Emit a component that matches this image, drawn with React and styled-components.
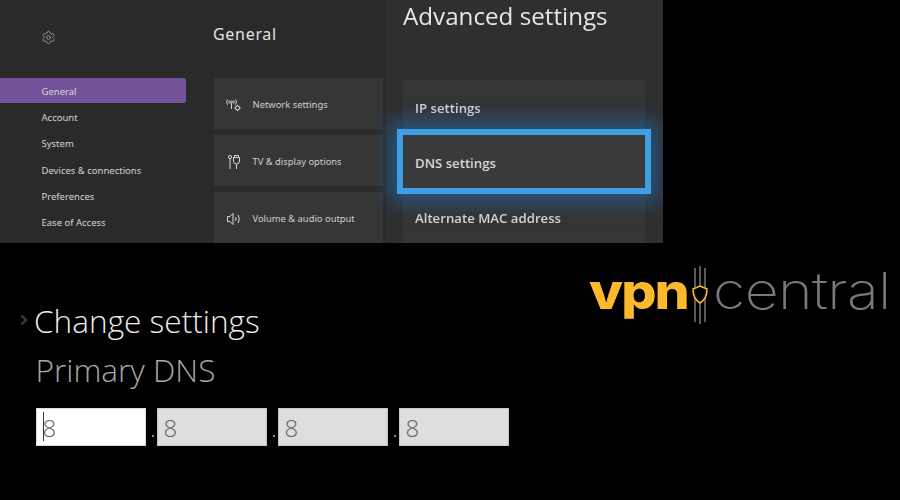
import React from 'react';
import styled, { createGlobalStyle } from 'styled-components';
import { Settings } from 'lucide-react';

const GlobalStyle = createGlobalStyle`
    html, body {
        margin: 0;
        padding: 0;
        background: #000;
    }
    body {
        width: 900px;
        height: 500px;
        overflow: hidden;
        font-family: "Noto Sans", sans-serif;
    }
`;

const Page = styled.div`
    width: 900px;
    height: 500px;
    background: #000;
    display: flex;
    flex-direction: column;
`;

const Console = styled.section`
    width: 663px;
    height: 243px;
    flex: none;
    display: flex;
    overflow: hidden;
    background: #2a2a2b;
`;

const Sidebar = styled.nav`
    width: 186px;
    flex: none;
    display: flex;
    flex-direction: column;
`;

const GearSlot = styled.div`
    height: 78px;
    padding: 30px 0 0 41px;
    box-sizing: border-box;
    color: #c4c4c4;
    display: flex;
    align-items: flex-start;
`;

const NavItem = styled.div`
    height: ${({$active}) => $active ? '25px' : '26.3px'};
    margin-bottom: ${({$active}) => $active ? '1px' : '0'};
    box-sizing: border-box;
    display: flex;
    align-items: center;
    padding: 1px 0 0 41.5px;
    font-size: 9.5px;
    color: #d4d4d4;
    background: ${({$active}) => $active ? '#74539b' : 'transparent'};
    border-radius: ${({$active}) => $active ? '0 3px 3px 0' : '0'};
`;

const GeneralColumn = styled.div`
    width: 200px;
    flex: none;
    box-sizing: border-box;
    padding-left: 28px;
    display: flex;
    flex-direction: column;
`;

const GeneralTitle = styled.h2`
    height: 78px;
    margin: 0 0 0 -1px;
    padding-top: 21px;
    box-sizing: border-box;
    font-size: 16px;
    line-height: 26px;
    font-weight: 400;
    letter-spacing: 0.7px;
    color: #e2e2e2;
    font-family: "Noto Sans", sans-serif;
`;

const MenuList = styled.div`
    display: flex;
    flex-direction: column;
    gap: 6px;
`;

const MenuCard = styled.div`
    width: 169px;
    height: 51px;
    flex: none;
    box-sizing: border-box;
    padding: 2px 0 0 12px;
    display: flex;
    align-items: center;
    gap: 10.5px;
    background: #363636;
    color: #cfcfcf;
    font-size: 9.4px;
`;

const MenuIcon = styled.svg`
    width: 16px;
    height: 16px;
    flex: none;
    fill: none;
    stroke: #d8d8d8;
    stroke-width: 1;
`;

const AdvancedColumn = styled.div`
    flex: 1;
    box-sizing: border-box;
    padding-left: 17px;
    padding-right: 18px;
    background: #2f2f2f;
    display: flex;
    flex-direction: column;
`;

const AdvancedTitle = styled.h1`
    height: 80px;
    margin: 0;
    font-family: "Open Sans", sans-serif;
    font-size: 24.2px;
    line-height: 32px;
    font-weight: 400;
    color: #e6e6e6;
    filter: blur(0.4px);
`;

const AdvancedRow = styled.div`
    height: ${({$focused}) => $focused ? '53px' : '55px'};
    flex: none;
    box-sizing: border-box;
    padding: ${({$drop = 1}) => $drop}px 0 0 12px;
    display: flex;
    align-items: center;
    background: ${({$focused}) => $focused ? '#3a3a3a' : '#353535'};
    color: #d6d6d6;
    font-family: "Open Sans", sans-serif;
    font-size: 13.2px;
    font-weight: 600;
    filter: ${({$focused}) => $focused ? 'none' : 'blur(0.4px)'};
    ${({$focused}) => $focused && `
        position: relative;
        z-index: 1;
        outline: 6px solid #3f9fe6;
        box-shadow: 0 0 18px 14px rgba(30, 120, 200, 0.5);
    `}
`;

const Lower = styled.section`
    flex: 1;
    display: flex;
    justify-content: space-between;
    padding: 17px 12px 0 20px;
`;

const DnsForm = styled.div`
    display: flex;
    flex-direction: column;
    padding-top: 39px;
`;

const Heading = styled.div`
    display: flex;
    align-items: center;
    height: 42px;
    color: #ececec;
    font-family: "Open Sans", sans-serif;
    font-weight: 300;
    font-size: 31.6px;
    gap: 6px;
    white-space: nowrap;
`;

const Chevron = styled.svg`
    width: 8px;
    height: 12px;
    flex: none;
    fill: none;
    stroke: #3a3a3a;
    stroke-width: 2.4;
`;

const SubHeading = styled.div`
    margin: 8px 0 0 15.5px;
    height: 42px;
    line-height: 42px;
    color: #a6a6a6;
    font-family: "Open Sans", sans-serif;
    font-weight: 300;
    font-size: 31.6px;
    white-space: nowrap;
`;

const IpRow = styled.div`
    margin: 17px 0 0 15.5px;
    display: flex;
    align-items: stretch;
`;

const Octet = styled.div`
    position: relative;
    width: 110px;
    height: 38px;
    box-sizing: border-box;
    padding-left: 6px;
    display: flex;
    align-items: center;
    background: ${({$active}) => $active ? '#ffffff' : '#dedede'};
    border: 1px solid ${({$active}) => $active ? '#dcdcdc' : '#c4c4c4'};
    color: #666;
    font-family: "Open Sans", sans-serif;
    font-weight: 300;
    font-size: 24px;
`;

const Caret = styled.span`
    position: absolute;
    left: 6px;
    top: 3px;
    width: 1px;
    height: 29px;
    background: #333;
`;

const Dot = styled.span`
    width: 11px;
    display: flex;
    justify-content: center;
    align-items: flex-end;
    padding: 0 0 9px 3px;
    box-sizing: border-box;
    &::before {
        content: "";
        width: 2px;
        height: 2px;
        background: #8a8a8a;
    }
`;

const Logo = styled.div`
    display: flex;
    align-items: center;
    height: 64px;
    line-height: 1;
    margin-top: 3px;
`;

const LogoWord = styled.span`
    display: block;
    flex: none;
    width: ${({$width}) => $width}px;
    font-family: "Inter", sans-serif;
    font-weight: ${({$bold}) => $bold ? 800 : 200};
    font-size: 50px;
    letter-spacing: ${({$bold}) => $bold ? '-1.8px' : '-0.5px'};
    color: ${({$bold}) => $bold ? '#fdb92e' : '#7a7a7a'};
    padding-bottom: 8px;
    transform: scaleX(${({$stretch}) => $stretch});
    transform-origin: left center;
`;

const LogoMark = styled.svg`
    width: 28px;
    height: 58px;
    flex: none;
    margin-left: -1px;
    margin-right: -1px;
`;

function NetworkIcon() {
    return (
        <MenuIcon viewBox="0 0 16 16">
            <path d="M1.6 2.5c-1 1.6-1 3.6 0 5.2M3.4 3.5c-.5 1-.5 2.2 0 3.2M9.5 2.5c1 1.6 1 3.6 0 5.2M7.7 3.5c.5 1 .5 2.2 0 3.2" />
            <circle cx="5.5" cy="5" r="1" />
            <path d="M5.5 6v6" />
            <circle cx="11.5" cy="11" r="2" />
            <path d="M11.5 7.8v1.2M11.5 13v1.2M8.3 11h1.2M13.5 11h1.2M9.3 8.8l.8.8M12.9 12.4l.8.8M13.7 8.8l-.8.8M10.1 12.4l-.8.8" />
        </MenuIcon>
    );
}

function CableIcon() {
    return (
        <MenuIcon viewBox="0 0 16 16">
            <circle cx="4" cy="3" r="1.6" />
            <path d="M4 4.6V15" />
            <path d="M8.5 3.5V1.5h4v2M7.5 3.5h6v3.5a3 3 0 0 1-6 0zM10.5 10v5" />
        </MenuIcon>
    );
}

function VolumeIcon() {
    return (
        <MenuIcon viewBox="0 0 16 16">
            <path d="M1.5 5.5h2.5l3-3v11l-3-3H1.5z" />
            <path d="M9.5 6c.7 1.2.7 2.8 0 4M12 4c1.5 2.4 1.5 5.6 0 8" />
        </MenuIcon>
    );
}

const navItems = ['General', 'Account', 'System', 'Devices & connections', 'Preferences', 'Ease of Access'];

export default function App() {
    return (
        <Page>
            <GlobalStyle />
            <Console>
                <Sidebar>
                    <GearSlot>
                        <Settings size={15} strokeWidth={1} />
                    </GearSlot>
                    {navItems.map((item, i) => (
                        <NavItem key={item} $active={i === 0}>{item}</NavItem>
                    ))}
                </Sidebar>
                <GeneralColumn>
                    <GeneralTitle>General</GeneralTitle>
                    <MenuList>
                        <MenuCard><NetworkIcon />Network settings</MenuCard>
                        <MenuCard><CableIcon />TV &amp; display options</MenuCard>
                        <MenuCard><VolumeIcon />Volume &amp; audio output</MenuCard>
                    </MenuList>
                </GeneralColumn>
                <AdvancedColumn>
                    <AdvancedTitle>Advanced settings</AdvancedTitle>
                    <AdvancedRow>IP settings</AdvancedRow>
                    <AdvancedRow $focused $drop={3}>DNS settings</AdvancedRow>
                    <AdvancedRow $drop={5}>Alternate MAC address</AdvancedRow>
                </AdvancedColumn>
            </Console>
            <Lower>
                <DnsForm>
                    <Heading>
                        <Chevron viewBox="0 0 8 12"><path d="M1.5 1.5l4.5 4.5-4.5 4.5" /></Chevron>
                        Change settings
                    </Heading>
                    <SubHeading>Primary DNS</SubHeading>
                    <IpRow>
                        <Octet $active><Caret />8</Octet>
                        <Dot />
                        <Octet>8</Octet>
                        <Dot />
                        <Octet>8</Octet>
                        <Dot />
                        <Octet>8</Octet>
                    </IpRow>
                </DnsForm>
                <Logo>
                    <LogoWord $bold $width={98} $stretch={1.11}>vpn</LogoWord>
                    <LogoMark viewBox="0 0 28 58">
                        <path d="M9 2v54M14 0v58M19 2v54" stroke="#8a8a8a" strokeWidth="1.3" fill="none" />
                        <path d="M14 20l7 3c0 7-2 11-7 14-5-3-7-7-7-14z" fill="#000" stroke="#fdb92e" strokeWidth="1.6" />
                    </LogoMark>
                    <LogoWord $width={175} $stretch={1.18}>central</LogoWord>
                </Logo>
            </Lower>
        </Page>
    );
}
